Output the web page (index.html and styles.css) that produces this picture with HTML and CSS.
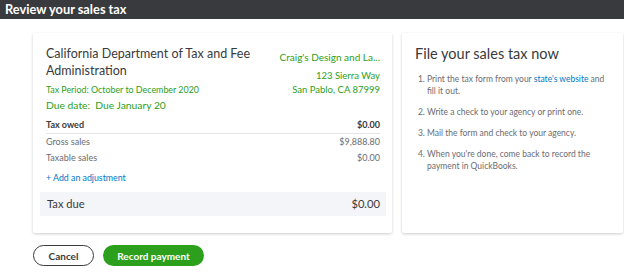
FILE: index.html
```html
<!DOCTYPE html>
<html lang="en">
<head>
    <meta charset="UTF-8">
    <meta name="viewport" content="width=device-width, initial-scale=1.0">
    <title>Review your sales tax</title>
    <link rel="stylesheet" href="styles.css">
</head>
<body>
    <div class="topbar">Review your sales tax</div>

    <div class="content">
        <div class="cards">
            <div class="card summary">
                <div class="summary-head">
                    <div class="agency">
                        <h2>California Department of Tax and Fee Administration</h2>
                        <div class="meta">Tax Period: October to December 2020</div>
                        <div class="meta due">Due date:&nbsp; Due January 20</div>
                    </div>
                    <div class="company">
                        <div class="company-name">Craig's Design and La...</div>
                        <div class="address">123 Sierra Way<br>San Pablo, CA 87999</div>
                    </div>
                </div>

                <div class="row row-head">
                    <span>Tax owed</span>
                    <span>$0.00</span>
                </div>
                <div class="row">
                    <span>Gross sales</span>
                    <span>$9,888.80</span>
                </div>
                <div class="row">
                    <span>Taxable sales</span>
                    <span>$0.00</span>
                </div>
                <a class="add-link" href="#">+ Add an adjustment</a>

                <div class="total">
                    <span>Tax due</span>
                    <span>$0.00</span>
                </div>
            </div>

            <div class="card steps">
                <h2>File your sales tax now</h2>
                <ol>
                    <li>Print the tax form from your <a href="#">state's website</a> and fill it out.</li>
                    <li>Write a check to your agency or print one.</li>
                    <li>Mail the form and check to your agency.</li>
                    <li>When you're done, come back to record the payment in QuickBooks.</li>
                </ol>
            </div>
        </div>

        <div class="actions">
            <button class="btn btn-cancel">Cancel</button>
            <button class="btn btn-primary">Record payment</button>
        </div>
    </div>
</body>
</html>
```

FILE: styles.css
```css
body {
    font-family: Lato, 'Open Sans', sans-serif;
    background-color: #ffffff;
    color: #393a3d;
    margin: 0;
    padding: 0;
}

.topbar {
    background-color: #393a3d;
    color: #ffffff;
    font-weight: 700;
    font-size: 12.8px;
    height: 19px;
    line-height: 18px;
    padding-left: 5px;
}

.content {
    padding: 14px 1px 0 33px;
}

.cards {
    display: flex;
    gap: 10px;
}

.card {
    background-color: #ffffff;
    border-radius: 2px;
    box-shadow: 0 1px 3px rgba(0, 0, 0, 0.2);
    height: 200px;
    box-sizing: border-box;
}

.summary {
    width: 359px;
    padding: 12px 12px 0 13px;
}

.summary-head {
    display: flex;
    justify-content: space-between;
}

h2 {
    font-weight: 400;
    font-size: 14.5px;
    line-height: 18px;
    margin: 0;
    color: #393a3d;
}

.agency {
    width: 215px;
}

.agency h2 {
    font-size: 12.5px;
    line-height: 17px;
}

.meta {
    color: #2ca01c;
    font-size: 8.9px;
    margin-top: 5px;
    line-height: 12px;
}

.meta.due {
    font-size: 10.3px;
    margin-top: 3px;
}

.company {
    text-align: right;
    color: #2ca01c;
    padding-top: 5px;
}

.company-name {
    font-size: 10px;
    line-height: 14px;
}

.address {
    font-size: 9.5px;
    margin-top: 5px;
    line-height: 14px;
}

.row {
    display: flex;
    justify-content: space-between;
    font-size: 9px;
    color: #6b6c72;
    line-height: 16px;
}

.row-head {
    margin-top: 6px;
    color: #393a3d;
    font-weight: 700;
    border-bottom: 1px solid #e3e5e8;
}

.add-link {
    display: block;
    color: #0077c5;
    font-size: 8.8px;
    text-decoration: none;
    margin-top: 5px;
    line-height: 14px;
}

.total {
    display: flex;
    justify-content: space-between;
    background-color: #f4f5f8;
    margin: 7px -6px 0;
    padding: 0 6px 0 7px;
    height: 24px;
    line-height: 24px;
    font-size: 11.2px;
}

.steps {
    width: 221px;
    padding: 12px 10px 0 13px;
}

ol {
    margin: 10px 0 0;
    padding-left: 12px;
    font-size: 8.5px;
    color: #6b6c72;
    line-height: 12px;
}

li {
    margin-bottom: 9px;
}

ol a {
    color: #0077c5;
    text-decoration: none;
}

.actions {
    display: flex;
    gap: 9px;
    margin-top: 12px;
}

.btn {
    font-family: Lato, 'Open Sans', sans-serif;
    height: 21px;
    border-radius: 11px;
    font-size: 10px;
    font-weight: 700;
    cursor: pointer;
    padding: 0;
}

.btn-cancel {
    width: 61px;
    background-color: #ffffff;
    border: 1.5px solid #393a3d;
    color: #393a3d;
}

.btn-primary {
    width: 101px;
    background-color: #2ca01c;
    border: none;
    color: #ffffff;
}
```
